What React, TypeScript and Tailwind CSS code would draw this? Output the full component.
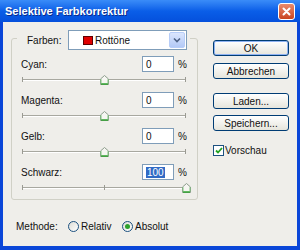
const FONT = "font-['Liberation_Sans',Arial,sans-serif]";

function Thumb() {
  return (
    <svg width="9" height="10" viewBox="0 0 9 10" className="block">
      <path d="M0.5 9.5V4L4.5 0.5L8.5 4V9.5Z" fill="#f6f6f2" stroke="#8c9c8c" />
      <path d="M1 9H8" stroke="#2ea12e" strokeWidth="1.5" />
      <path d="M1 8.5V4.2M8 8.5V4.2" stroke="#7cc47c" />
    </svg>
  );
}

function Slider({ value }: { value: number }) {
  // value from -100 to 100
  const pct = (value + 100) / 200;
  return (
    <div className="relative ml-[10px] w-[164px] h-[14px]">
      <div className="absolute left-0 right-0 top-[6px] h-[2px] border-t border-[#a8a8a0] bg-white" />
      <div className="absolute left-0 top-[4px] w-px h-[5px] bg-[#9a9a92]" />
      <div className="absolute left-[82px] top-[4px] w-px h-[5px] bg-[#9a9a92]" />
      <div className="absolute right-0 top-[4px] w-px h-[5px] bg-[#9a9a92]" />
      <div className="absolute top-[2px]" style={{ left: Math.round(pct * 164) - 4 }}>
        <Thumb />
      </div>
    </div>
  );
}

function Row({ label, value, selected }: { label: string; value: number; selected?: boolean }) {
  return (
    <div className="flex flex-col h-[36px]">
      <div className="flex items-center h-[16px]">
        <span className="pl-[9px] w-[130px]">{label}</span>
        <div className="w-[32px] h-[16px] bg-white border border-[#7f9db9] flex items-center pl-[3px]">
          {selected ? (
            <span className="bg-[#316ac5] text-white px-px leading-[11px]">{value}</span>
          ) : (
            <span>{value}</span>
          )}
        </div>
        <span className="ml-[4px]">%</span>
      </div>
      <div className="mt-px">
        <Slider value={value} />
      </div>
    </div>
  );
}

function XpButton({ children, isDefault }: { children: React.ReactNode; isDefault?: boolean }) {
  return (
    <div
      className={`w-[76px] h-[16px] rounded-[3px] border border-[#003c74] bg-linear-to-b from-[#ffffff] to-[#e6e5dc] flex items-center justify-center ${
        isDefault ? "shadow-[inset_0_0_0_1px_#8fb2f2]" : ""
      }`}
    >
      {children}
    </div>
  );
}

function Radio({ checked }: { checked?: boolean }) {
  return (
    <div className="w-[11px] h-[11px] rounded-full border border-[#1c5180] bg-linear-to-br from-[#dcdcd6] to-white flex items-center justify-center">
      {checked && <div className="w-[5px] h-[5px] rounded-full bg-[#2ca12c]" />}
    </div>
  );
}

export default function App() {
  return (
    <div className={`w-[300px] h-[250px] flex flex-col bg-[#0a46d8] text-[10px] text-[#111] ${FONT}`}>
      {/* title bar */}
      <div className="h-[22px] flex items-center bg-linear-to-b from-[#3a8cf8] via-[#0a5ee8] to-[#0550dc]">
        <span className="ml-[5px] text-white font-bold text-[11px] [text-shadow:1px_1px_#0b2c8c]">
          Selektive Farbkorrektur
        </span>
        <div className="ml-auto mr-[5px] mt-[1px] w-[17px] h-[17px] rounded-[3px] border border-white bg-linear-to-b from-[#e98a6c] to-[#c9431d] flex items-center justify-center">
          <svg width="9" height="9" viewBox="0 0 9 9">
            <path d="M1.5 1.5L7.5 7.5M7.5 1.5L1.5 7.5" stroke="white" strokeWidth="2" strokeLinecap="round" />
          </svg>
        </div>
      </div>

      {/* body */}
      <div className="flex-1 mx-[3px] mb-[4px] bg-[#efeeea] flex flex-col">
        <div className="flex">
          <div className="ml-[8px] mt-[16px] w-[187px] h-[162px] border border-[#d0d0c6] rounded-[3px] flex flex-col">
            <div className="ml-[5px] w-[173px] h-[20px] -mt-[9px] bg-[#efeeea] flex items-center">
              <span className="pl-[10px]">Farben:</span>
              <div className="ml-auto mr-[3px] w-[119px] h-[20px] bg-white border border-[#7f9db9] flex items-center">
                <div className="ml-[14px] w-[10px] h-[9px] bg-[#e00000] border border-[#600000]" />
                <span className="ml-[2px]">Rottöne</span>
                <div className="ml-auto mr-px w-[16px] h-[16px] rounded-[2px] border border-[#b7cdf8] bg-linear-to-b from-[#dbe6fd] to-[#b3c9f6] flex items-center justify-center">
                  <svg width="8" height="6" viewBox="0 0 8 6">
                    <path d="M1 1.5L4 4.5L7 1.5" stroke="#4d6185" strokeWidth="1.6" fill="none" />
                  </svg>
                </div>
              </div>
            </div>
            <div className="mt-[6px] flex flex-col">
              <Row label="Cyan:" value={0} />
              <Row label="Magenta:" value={0} />
              <Row label="Gelb:" value={0} />
              <Row label="Schwarz:" value={100} selected />
            </div>
          </div>

          <div className="ml-[15px] pt-[18px] flex flex-col">
            <XpButton isDefault>OK</XpButton>
            <div className="mt-[7px]">
              <XpButton>Abbrechen</XpButton>
            </div>
            <div className="mt-[14px]">
              <XpButton>Laden...</XpButton>
            </div>
            <div className="mt-[6px]">
              <XpButton>Speichern...</XpButton>
            </div>
            <div className="mt-[12px] flex items-center">
              <div className="w-[11px] h-[11px] border border-[#1c5180] bg-white flex items-center justify-center">
                <svg width="8" height="7" viewBox="0 0 8 7">
                  <path d="M1 3.5L3 5.5L7 1" stroke="#21a121" strokeWidth="1.8" fill="none" />
                </svg>
              </div>
              <span className="ml-[1px]">Vorschau</span>
            </div>
          </div>
        </div>

        <div className="mt-[20px] h-[12px] flex items-center pl-[13px]">
          <span className="w-[52px]">Methode:</span>
          <Radio />
          <span className="ml-[2px] w-[41px]">Relativ</span>
          <Radio checked />
          <span className="ml-[2px]">Absolut</span>
        </div>
      </div>
    </div>
  );
}
